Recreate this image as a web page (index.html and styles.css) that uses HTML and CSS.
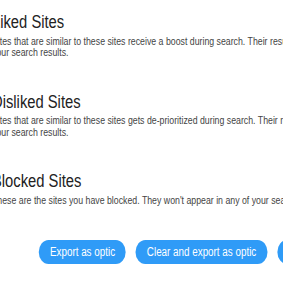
FILE: index.html
```html
<!DOCTYPE html>
<html>
<head>
<meta charset="utf-8">
<link rel="stylesheet" href="styles.css">
</head>
<body>
<main class="page">
  <section class="group">
    <h2 class="title">Liked Sites</h2>
    <p class="desc">Sites that are similar to these sites receive a boost during search. Their results will appear higher in<br>your search results.</p>
  </section>
  <section class="group">
    <h2 class="title">Disliked Sites</h2>
    <p class="desc">Sites that are similar to these sites gets de-prioritized during search. Their results will appear lower in<br>your search results.</p>
  </section>
  <section class="group">
    <h2 class="title">Blocked Sites</h2>
    <p class="desc">These are the sites you have blocked. They won't appear in any of your search results.</p>
  </section>
  <div class="actions">
    <button class="btn">Export as optic</button>
    <button class="btn">Clear and export as optic</button>
    <button class="btn">Import from optic</button>
  </div>
</main>
</body>
</html>
```
FILE: styles.css
```css
html, body {
  margin: 0;
  padding: 0;
  background: #ffffff;
  overflow: hidden;
}
.page {
  margin-left: -8px;
  padding-top: 11px;
  font-family: "Liberation Sans", Arial, sans-serif;
  white-space: nowrap;
  transform: scaleX(0.82);
  transform-origin: 0 0;
}
.group {
  margin-bottom: 32px;
}
.title {
  margin: 0;
  font-size: 18px;
  line-height: 22px;
  font-weight: normal;
  color: #222222;
}
.desc {
  margin: 2.5px 0 0 0;
  font-size: 10.7px;
  line-height: 11.5px;
  color: #444444;
}
.actions {
  display: flex;
  gap: 12px;
  margin-left: 57.3px;
  margin-top: 34px;
}
.btn {
  font-family: inherit;
  font-size: 12px;
  height: 24px;
  padding: 0 13.4px;
  border: none;
  border-radius: 14px;
  background: #2f9bf7;
  color: #ffffff;
  white-space: nowrap;
  flex-shrink: 0;
}
```
